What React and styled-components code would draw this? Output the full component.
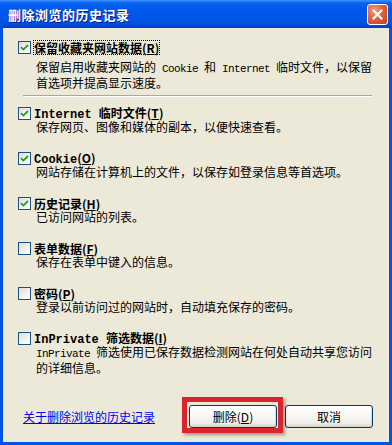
import React from 'react';
import styled, { createGlobalStyle } from 'styled-components';

const GlobalStyle = createGlobalStyle`
    html, body {
        margin: 0;
        padding: 0;
        background: #ECE9D8;
    }
    * {
        box-sizing: border-box;
    }
`;

const CJK = '"Noto Sans CJK SC", "Noto Sans", sans-serif';

const Window = styled.div`
    width: 392px;
    height: 445px;
    display: flex;
    flex-direction: column;
    background: #0054E3;
    font-family: ${CJK};
    font-size: 12px;
    color: #000;
`;

const TitleBar = styled.div`
    height: 28px;
    flex-shrink: 0;
    display: flex;
    align-items: center;
    justify-content: space-between;
    padding: 0 4px 0 8px;
    background: linear-gradient(to bottom, #3D95FF 0%, #0A62F0 10%, #0058EC 35%, #0054E3 80%, #0048D8 92%, #003BC8 100%);
`;

const Title = styled.span`
    color: #fff;
    font-size: 13px;
    font-weight: 700;
    letter-spacing: 0.5px;
    text-shadow: 1px 1px 0 #0A1883;
`;

const CloseButton = styled.div`
    width: 21px;
    height: 21px;
    margin-top: 1px;
    border: 1px solid #fff;
    border-radius: 3px;
    display: flex;
    align-items: center;
    justify-content: center;
    background: radial-gradient(circle at 35% 30%, #F0A080 0%, #E2623C 45%, #C33F16 100%);
`;

const Body = styled.div`
    flex: 1;
    display: flex;
    flex-direction: column;
    margin: 0 3px 3px 3px;
    padding: 13px 16px 14px 15px;
    background: #ECE9D8;
`;

const Item = styled.div`
    display: flex;
    flex-direction: column;
    margin-top: ${p => p.$gap}px;
`;

const LabelRow = styled.div`
    display: flex;
    align-items: center;
    gap: 3px;
    height: 13px;
`;

const Box = styled.span`
    width: 13px;
    height: 13px;
    flex-shrink: 0;
    display: flex;
    align-items: center;
    justify-content: center;
    border: 1px solid #1C5180;
    background: linear-gradient(135deg, #DCDCD7 0%, #F4F4F0 60%, #fff 100%);
`;

const Label = styled.span`
    font-weight: 700;
    line-height: 13px;
    white-space: nowrap;
    outline: ${p => (p.$focused ? '1px dotted #000' : 'none')};
`;

const LabelMono = styled.span`
    font-family: "Liberation Mono", monospace;
    font-weight: 700;
    font-size: 12px;
`;

const Desc = styled.div`
    margin-top: ${p => p.$top || 0}px;
    padding-left: 18px;
    line-height: 13px;
    white-space: nowrap;
`;

const Mono = styled.span`
    font-family: "Liberation Mono", monospace;
    font-size: 11px;
    letter-spacing: -0.6px;
`;

const Separator = styled.div`
    height: 2px;
    margin: 6px 1px 0 5px;
    border-top: 1px solid #ACA899;
    border-bottom: 1px solid #fff;
`;

const Footer = styled.div`
    margin-top: auto;
    display: flex;
    align-items: center;
    gap: 8px;
`;

const HelpLink = styled.a`
    margin-left: 5px;
    margin-right: auto;
    color: #0000FF;
    text-decoration: underline;
    line-height: 13px;
    cursor: pointer;
`;

const Highlight = styled.div`
    position: relative;
    display: flex;
    &::after {
        content: '';
        position: absolute;
        top: -8px;
        left: -7px;
        right: -6px;
        bottom: -5px;
        border: 5px solid #D9262C;
        box-shadow: 2px 2px 3px rgba(0, 0, 0, 0.35);
        pointer-events: none;
    }
`;

const Button = styled.button`
    width: 88px;
    height: 23px;
    padding: 0;
    font-family: ${CJK};
    font-size: 12px;
    color: #000;
    border: 1px solid #003C74;
    border-radius: 3px;
    background: linear-gradient(to bottom, #FFFFFF 0%, #F5F4EF 60%, #ECEBE6 85%, #D6D0C5 100%);
    box-shadow: inset -1px -1px 0 rgba(214, 208, 197, 0.8);
`;

const Check = () => (
    <svg width="9" height="9" viewBox="0 0 9 9">
        <path d="M1 4.2 L3.4 6.6 L8 2" fill="none" stroke="#21A121" strokeWidth="1.8" />
    </svg>
);

const CloseX = () => (
    <svg width="11" height="11" viewBox="0 0 11 11">
        <path d="M1.5 1.5 L9.5 9.5 M9.5 1.5 L1.5 9.5" stroke="#fff" strokeWidth="2" strokeLinecap="square" />
    </svg>
);

const Option = ({ checked, focused, label, children, gap = 19, descTop = 0 }) => (
    <Item $gap={gap}>
        <LabelRow>
            <Box>{checked && <Check />}</Box>
            <Label $focused={focused}>{label}</Label>
        </LabelRow>
        <Desc $top={descTop}>{children}</Desc>
    </Item>
);

export default function App() {
    return (
        <>
            <GlobalStyle />
            <Window>
                <TitleBar>
                    <Title>删除浏览的历史记录</Title>
                    <CloseButton><CloseX /></CloseButton>
                </TitleBar>
                <Body>
                    <Option checked focused gap={0} descTop={6}
                        label={<>保留收藏夹网站数据(<u>R</u>)</>}>
                        保留启用收藏夹网站的<Mono> Cookie </Mono>和<Mono> Internet </Mono>临时文件，以保留<br />
                        首选项并提高显示速度。
                    </Option>
                    <Separator />
                    <Option checked gap={10}
                        label={<><LabelMono>Internet </LabelMono>临时文件(<u>T</u>)</>}>
                        保存网页、图像和媒体的副本，以便快速查看。
                    </Option>
                    <Option checked
                        label={<><LabelMono>Cookie</LabelMono>(<u>O</u>)</>}>
                        网站存储在计算机上的文件，以保存如登录信息等首选项。
                    </Option>
                    <Option checked
                        label={<>历史记录(<u>H</u>)</>}>
                        已访问网站的列表。
                    </Option>
                    <Option
                        label={<>表单数据(<u>F</u>)</>}>
                        保存在表单中键入的信息。
                    </Option>
                    <Option
                        label={<>密码(<u>P</u>)</>}>
                        登录以前访问过的网站时，自动填充保存的密码。
                    </Option>
                    <Option
                        label={<><LabelMono>InPrivate </LabelMono>筛选数据(<u>I</u>)</>}>
                        <Mono>InPrivate </Mono>筛选使用已保存数据检测网站在何处自动共享您访问<br />
                        的详细信息。
                    </Option>
                    <Footer>
                        <HelpLink>关于删除浏览的历史记录</HelpLink>
                        <Highlight>
                            <Button>删除(<u>D</u>)</Button>
                        </Highlight>
                        <Button>取消</Button>
                    </Footer>
                </Body>
            </Window>
        </>
    );
}
